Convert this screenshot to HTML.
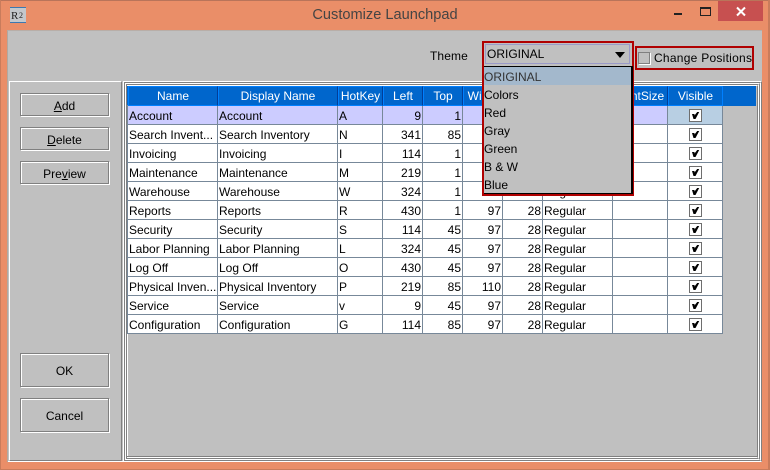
<!DOCTYPE html>
<html><head><meta charset="utf-8"><style>
*{box-sizing:border-box}
html,body{margin:0;padding:0}
body{width:770px;height:470px;overflow:hidden;background:#EA8E68;position:relative;font:12px "Liberation Sans",sans-serif;color:#000}
.a{position:absolute}
.btn{position:absolute;left:20px;width:89px;border:1px solid #808080;box-shadow:inset 1px 1px 0 #fff,1px 1px 0 #fff;text-align:center;font-size:12px;color:#000}
table{position:absolute;left:128px;top:86px;border-collapse:separate;border-spacing:0;table-layout:fixed;width:595px}
th{height:20px;background:#0066CC;color:#fff;font-weight:normal;font-size:12px;padding:0;text-align:center;border:1px solid #0080FF;border-right:1px solid #003E99;overflow:hidden;white-space:nowrap}
th:last-child{border-right-color:#0080FF}
td{height:19px;background:#fff;padding:2px 0 0 1px;border-right:1px solid #778899;border-bottom:1px solid #778899;overflow:hidden;white-space:nowrap;font-size:12px;line-height:16px;color:#000}
td.r{text-align:right;padding:2px 1px 0 0}
td.c{padding:0;position:relative}
tr.s td{background:#CCCCFF}
tr.s td.c{background:#B8CFE3}
.cb{position:absolute;left:21px;top:3px;display:block}
.it{position:absolute;left:484px;width:146px;height:18px;line-height:20px;color:#000;font-size:12px}
u{text-decoration:underline}
</style></head><body>
<svg width="0" height="0" style="position:absolute"><defs><g id="k"><rect x="0.5" y="0.5" width="12" height="12" fill="#fff" stroke="#6E6E6E"/><path d="M3 5H5.5V6.5L8.2 3H10.2L6.5 10H4.5Z" fill="#000"/></g></defs></svg>

<div class="a" style="left:0;top:0;width:770px;height:1px;background:#B9745A"></div>
<div class="a" style="left:0;top:0;width:1px;height:470px;background:#C97C5C"></div>
<div class="a" style="left:768px;top:0;width:2px;height:470px;background:#C97C5C"></div>
<div class="a" style="left:0;top:469px;width:770px;height:1px;background:#C97C5C"></div>

<svg class="a" style="left:10px;top:7px" width="16" height="16"><rect width="16" height="16" fill="#C4C8CC"/><rect width="16" height="1" fill="#3C78B0"/><rect y="15" width="16" height="1" fill="#3C78B0"/><text x="1" y="12" font-family="Liberation Serif" font-size="11" fill="#222">R</text><text x="9" y="11" font-family="Liberation Serif" font-size="8" fill="#222">2</text></svg>
<div class="a" style="left:0;top:7px;width:770px;text-align:center;font-size:14.6px;line-height:17px;color:#444">Customize Launchpad</div>

<div class="a" style="left:674px;top:13px;width:8px;height:2px;background:#222"></div>
<div class="a" style="left:700px;top:7px;width:11px;height:9px;border:1px solid #222;border-top-width:2px"></div>
<div class="a" style="left:718px;top:1px;width:45px;height:20px;background:#C75050"></div>
<svg class="a" style="left:735px;top:6px" width="12" height="11"><path d="M2 1.5L10 9.5M10 1.5L2 9.5" stroke="#fff" stroke-width="2"/></svg>

<div class="a" style="left:7px;top:30px;width:755px;height:432px;background:#C0C0C0;border-left:1px solid #B0A8A0;border-top:1px solid #B8AEA8"></div>

<div class="a" style="left:8px;top:461px;width:115px;height:1px;background:#fff"></div>
<div class="a" style="left:9px;top:81px;width:113px;height:380px;border:1px solid #808080;border-left-color:#fff;border-top-color:#fff"></div>

<div class="a" style="left:123px;top:81px;width:639px;height:381px;border:1px solid #fff;border-right-color:#808080"></div>
<div class="a" style="left:124px;top:82px;width:637px;height:379px;border:1px solid #808080;border-right-color:#fff"></div>
<div class="a" style="left:125px;top:83px;width:635px;height:377px;border:1px solid #fff;border-right-color:#808080"></div>
<div class="a" style="left:126px;top:84px;width:633px;height:375px;border:1px solid #808080;border-right-color:#fff"></div>
<div class="a" style="left:127px;top:85px;width:631px;height:373px;border:1px solid #fff;border-right-color:#808080"></div>
<div class="a" style="left:127px;top:456px;width:630px;height:1px;background:#808080"></div>

<div class="btn" style="top:93px;height:23px;line-height:25px"><u>A</u>dd</div>
<div class="btn" style="top:127px;height:23px;line-height:25px"><u>D</u>elete</div>
<div class="btn" style="top:161px;height:23px;line-height:25px">Pre<u>v</u>iew</div>
<div class="btn" style="top:353px;height:34px;line-height:35px">OK</div>
<div class="btn" style="top:398px;height:34px;line-height:35px">Cancel</div>

<div class="a" style="left:127px;top:86px;width:629px;height:20px;background:#0066CC"></div>
<div class="a" style="left:127px;top:105px;width:1px;height:229px;background:#778899"></div>

<table>
<colgroup><col style="width:90px"><col style="width:120px"><col style="width:45px"><col style="width:40px"><col style="width:40px"><col style="width:40px"><col style="width:40px"><col style="width:70px"><col style="width:55px"><col style="width:55px"></colgroup>
<tr><th>Name</th><th>Display Name</th><th>HotKey</th><th>Left</th><th>Top</th><th>Width</th><th>Height</th><th>Font</th><th>FontSize</th><th>Visible</th></tr>
<tr class="s"><td>Account</td><td>Account</td><td>A</td><td class="r">9</td><td class="r">1</td><td class="r">97</td><td class="r">28</td><td>Regular</td><td></td><td class="c"><svg class="cb" width="13" height="13"><use href="#k"/></svg></td></tr>
<tr><td>Search Invent...</td><td>Search Inventory</td><td>N</td><td class="r">341</td><td class="r">85</td><td class="r">110</td><td class="r">28</td><td>Regular</td><td></td><td class="c"><svg class="cb" width="13" height="13"><use href="#k"/></svg></td></tr>
<tr><td>Invoicing</td><td>Invoicing</td><td>I</td><td class="r">114</td><td class="r">1</td><td class="r">97</td><td class="r">28</td><td>Regular</td><td></td><td class="c"><svg class="cb" width="13" height="13"><use href="#k"/></svg></td></tr>
<tr><td>Maintenance</td><td>Maintenance</td><td>M</td><td class="r">219</td><td class="r">1</td><td class="r">97</td><td class="r">28</td><td>Regular</td><td></td><td class="c"><svg class="cb" width="13" height="13"><use href="#k"/></svg></td></tr>
<tr><td>Warehouse</td><td>Warehouse</td><td>W</td><td class="r">324</td><td class="r">1</td><td class="r">97</td><td class="r">28</td><td>Regular</td><td></td><td class="c"><svg class="cb" width="13" height="13"><use href="#k"/></svg></td></tr>
<tr><td>Reports</td><td>Reports</td><td>R</td><td class="r">430</td><td class="r">1</td><td class="r">97</td><td class="r">28</td><td>Regular</td><td></td><td class="c"><svg class="cb" width="13" height="13"><use href="#k"/></svg></td></tr>
<tr><td>Security</td><td>Security</td><td>S</td><td class="r">114</td><td class="r">45</td><td class="r">97</td><td class="r">28</td><td>Regular</td><td></td><td class="c"><svg class="cb" width="13" height="13"><use href="#k"/></svg></td></tr>
<tr><td>Labor Planning</td><td>Labor Planning</td><td>L</td><td class="r">324</td><td class="r">45</td><td class="r">97</td><td class="r">28</td><td>Regular</td><td></td><td class="c"><svg class="cb" width="13" height="13"><use href="#k"/></svg></td></tr>
<tr><td>Log Off</td><td>Log Off</td><td>O</td><td class="r">430</td><td class="r">45</td><td class="r">97</td><td class="r">28</td><td>Regular</td><td></td><td class="c"><svg class="cb" width="13" height="13"><use href="#k"/></svg></td></tr>
<tr><td>Physical Inven...</td><td>Physical Inventory</td><td>P</td><td class="r">219</td><td class="r">85</td><td class="r">110</td><td class="r">28</td><td>Regular</td><td></td><td class="c"><svg class="cb" width="13" height="13"><use href="#k"/></svg></td></tr>
<tr><td>Service</td><td>Service</td><td>v</td><td class="r">9</td><td class="r">45</td><td class="r">97</td><td class="r">28</td><td>Regular</td><td></td><td class="c"><svg class="cb" width="13" height="13"><use href="#k"/></svg></td></tr>
<tr><td>Configuration</td><td>Configuration</td><td>G</td><td class="r">114</td><td class="r">85</td><td class="r">97</td><td class="r">28</td><td>Regular</td><td></td><td class="c"><svg class="cb" width="13" height="13"><use href="#k"/></svg></td></tr>
</table>

<div class="a" style="left:430px;top:49px;font-size:12px;line-height:14px;color:#000;letter-spacing:.1px">Theme</div>

<div class="a" style="left:482px;top:41px;width:152px;height:155px;border:2px solid #B00000;background:#C0C0C0"></div>
<div class="a" style="left:485px;top:44px;width:145px;height:20px;border:1px solid #9A9AC8;line-height:18px;padding-left:1px;font-size:12px;color:#000">ORIGINAL</div>
<svg class="a" style="left:614px;top:52px" width="12" height="7"><path d="M1 0H11L6 6Z" fill="#000"/></svg>
<div class="a" style="left:484px;top:66px;width:149px;height:128px;border-top:1px solid #000;border-right:2px solid #000;border-bottom:1px solid #000;background:#C0C0C0"></div>
<div class="a" style="left:484px;top:67px;width:147px;height:18px;background:#A3B8CC"></div>
<div class="a it" style="top:67px;color:#333">ORIGINAL</div>
<div class="a it" style="top:85px">Colors</div>
<div class="a it" style="top:103px">Red</div>
<div class="a it" style="top:121px">Gray</div>
<div class="a it" style="top:139px">Green</div>
<div class="a it" style="top:157px">B &amp; W</div>
<div class="a it" style="top:175px">Blue</div>

<div class="a" style="left:635px;top:46px;width:119px;height:24px;border:2px solid #B00000"></div>
<div class="a" style="left:638px;top:52px;width:12px;height:12px;border:1px solid #808080;box-shadow:1px 1px 0 #fff;background:#C0C0C0"></div>
<div class="a" style="left:654px;top:51px;line-height:14px;font-size:12px;color:#000;white-space:nowrap;letter-spacing:.26px">Change Positions</div>
</body></html>
